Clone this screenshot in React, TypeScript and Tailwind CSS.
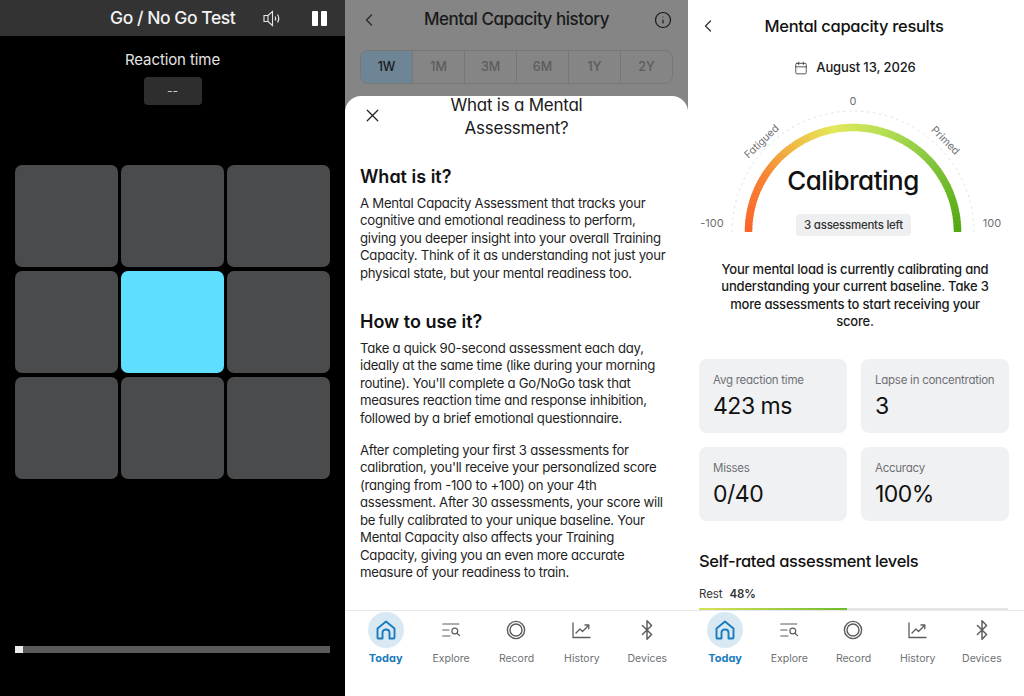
import React from "react";
import { ChevronLeft, X, Info, Calendar, Bluetooth } from "lucide-react";

const lerp = (a: number[], b: number[], t: number) => a.map((v, i) => Math.round(v + (b[i] - v) * t));
const stops: [number, number[]][] = [
  [0, [251, 101, 42]],
  [0.17, [248, 130, 50]],
  [0.33, [238, 196, 72]],
  [0.44, [228, 232, 90]],
  [0.6, [180, 222, 84]],
  [0.78, [130, 196, 60]],
  [1, [82, 168, 16]],
];
const colorAt = (t: number) => {
  for (let i = 1; i < stops.length; i++) {
    if (t <= stops[i][0]) {
      const [p0, c0] = stops[i - 1];
      const [p1, c1] = stops[i];
      const c = lerp(c0, c1, (t - p0) / (p1 - p0));
      return `rgb(${c[0]},${c[1]},${c[2]})`;
    }
  }
  return "rgb(82,168,16)";
};

function Gauge() {
  const cx = 165, cy = 138, r = 104.5;
  const n = 90;
  const segs = Array.from({ length: n }, (_, i) => {
    const a0 = Math.PI - (Math.PI * i) / n;
    const a1 = Math.PI - (Math.PI * (i + 1.3)) / n;
    const end = i === n - 1 ? 0 : a1;
    return {
      d: `M${cx + r * Math.cos(a0)} ${cy - r * Math.sin(a0)}A${r} ${r} 0 0 1 ${cx + r * Math.cos(end)} ${cy - r * Math.sin(end)}`,
      c: colorAt(i / (n - 1)),
    };
  });
  return (
    <svg width="336" height="146" viewBox="0 0 336 146" className="block">
      <path d={`M${cx - 121} ${cy}A121 121 0 0 1 ${cx + 121} ${cy}`} fill="none" stroke="#dfe2e6" strokeWidth="1" strokeDasharray="2.5 3.5" />
      {segs.map((s, i) => (
        <path key={i} d={s.d} fill="none" stroke={s.c} strokeWidth="7.5" />
      ))}
      <text x="165" y="11" textAnchor="middle" fontSize="11" fill="#6e7073">0</text>
      <text x="24" y="133" textAnchor="middle" fontSize="11" fill="#6e7073">-100</text>
      <text x="304" y="133" textAnchor="middle" fontSize="11" fill="#6e7073">100</text>
      <text x="0" y="0" textAnchor="middle" fontSize="10.5" fill="#6e7073" transform="translate(76 50) rotate(-44)">Fatigued</text>
      <text x="0" y="0" textAnchor="middle" fontSize="10.5" fill="#6e7073" transform="translate(255 49) rotate(45)">Primed</text>
    </svg>
  );
}

const HomeIcon = () => (
  <svg width="20" height="20" viewBox="0 0 20 20" fill="none" stroke="#1a7bbd" strokeWidth="1.9" strokeLinejoin="round" strokeLinecap="round">
    <path d="M1.5 8.5L10 1.5L18.5 8.5V17.5C18.5 18.1 18.1 18.5 17.5 18.5H13.5V12.5C13.5 10.6 12 9.5 10 9.5C8 9.5 6.5 10.6 6.5 12.5V18.5H2.5C1.9 18.5 1.5 18.1 1.5 17.5Z" />
  </svg>
);
const ExploreIcon = ({ c }: { c: string }) => (
  <svg width="19" height="14" viewBox="0 0 19 14" fill="none" stroke={c} strokeWidth="1.2" strokeLinecap="round">
    <path d="M0.8 1H16.8M0.8 7H7M0.8 13H8" />
    <circle cx="12.8" cy="8" r="2.9" />
    <path d="M15 10.2L17.5 12.6" />
  </svg>
);
const RecordIcon = ({ c }: { c: string }) => (
  <svg width="20" height="20" viewBox="0 0 20 20" fill="none" stroke={c}>
    <circle cx="10" cy="10" r="8.6" strokeWidth="1.4" />
    <circle cx="10" cy="10" r="6" strokeWidth="1.4" />
  </svg>
);
const HistoryIcon = ({ c }: { c: string }) => (
  <svg width="19" height="17" viewBox="0 0 19 17" fill="none" stroke={c} strokeWidth="1.3" strokeLinecap="round" strokeLinejoin="round">
    <path d="M1 1V15.5H18" />
    <path d="M4 11L8 7L10.5 9.5L16.5 3.5" />
    <path d="M13 3H16.8V6.8" />
  </svg>
);

const tabs = [
  { label: "Explore", Icon: ExploreIcon },
  { label: "Record", Icon: RecordIcon },
  { label: "History", Icon: HistoryIcon },
  {
    label: "Devices",
    Icon: ({ c }: { c: string }) => <Bluetooth size={22} color={c} strokeWidth={1.6} />,
  },
];

function TabBar({ cls }: { cls: string }) {
  return (
    <div className={`h-[86px] shrink-0 bg-white border-t border-[#e8e8e8] grid grid-cols-5 ${cls}`}>
      <div className="flex flex-col items-center pt-[1px]">
        <div className="w-9 h-9 rounded-full bg-[#d9e9f4] flex items-center justify-center">
          <HomeIcon />
        </div>
        <span className="mt-[3px] text-[11px] leading-[14px] font-bold text-[#1a7bbd]">Today</span>
      </div>
      {tabs.map(({ label, Icon }) => (
        <div key={label} className="flex flex-col items-center pt-[1px]">
          <div className="w-9 h-9 flex items-center justify-center">
            <Icon c="#5c5c5c" />
          </div>
          <span className="mt-[4px] text-[10.5px] leading-[14px] text-[#6e7073]">{label}</span>
        </div>
      ))}
    </div>
  );
}

function Stat({ label, value }: { label: string; value: string }) {
  return (
    <div className="h-[74px] rounded-lg bg-[#f0f1f3] px-[14px] pt-[14px]">
      <div className="text-[11.5px] leading-[14px] tracking-[-0.25px] whitespace-nowrap text-[#6e7073]">{label}</div>
      <div className="mt-[4px] text-[23px] leading-[30px] tracking-[-0.5px] text-[#111]">{value}</div>
    </div>
  );
}

export default function App() {
  return (
    <div className="w-[1024px] h-[696px] flex overflow-hidden bg-white font-['Inter',sans-serif]">
      {/* Panel 1 */}
      <div className="w-[345px] h-full shrink-0 bg-black flex flex-col items-center">
        <div className="w-full h-[36px] bg-[#333333] flex items-center pl-[110px] pr-[18px] text-white">
          <span className="text-[17.5px] font-medium text-[#f2f2f2] tracking-[-0.45px]">Go / No Go Test</span>
          <svg width="18" height="17" viewBox="0 0 18 17" fill="none" stroke="#e5e5e5" strokeWidth="1.1" className="ml-[28px]">
            <path d="M1 5.5H5L9.5 1.5V15.5L5 11.5H1Z" />
            <path d="M5 5.5V11.5" />
            <path d="M12 6.5Q13.5 8.5 12 10.5M14.5 4.5Q17 8.5 14.5 12.5" strokeWidth="1.2" />
          </svg>
          <div className="ml-auto flex gap-[3px]">
            <div className="w-[6px] h-[15px] bg-white rounded-[1px]" />
            <div className="w-[6px] h-[15px] bg-white rounded-[1px]" />
          </div>
        </div>
        <div className="mt-[14px] text-[15px] leading-[20px] tracking-[-0.1px] text-[#e4e4e4]">Reaction time</div>
        <div className="mt-[7px] w-[58px] h-[28px] rounded bg-[#2e2e2e] flex items-center justify-center text-[12px] text-[#cfcfcf]">--</div>
        <div className="mt-[59.5px] w-[315px] grid grid-cols-3 gap-[3.5px]">
          {Array.from({ length: 9 }, (_, i) => (
            <div key={i} className={`h-[102.5px] rounded-[7px] ${i === 4 ? "bg-[#5edfff]" : "bg-[#4a4b4d]"}`} />
          ))}
        </div>
        <div className="mt-[167px] w-[315px] h-[7px] bg-[#5a5a5a]">
          <div className="w-[8px] h-full bg-[#ececec]" />
        </div>
      </div>

      {/* Panel 2 */}
      <div className="w-[343px] h-full shrink-0 bg-[#858585] flex flex-col [font-feature-settings:'cv11']">
        <div className="h-[39px] flex items-center justify-between pl-[14px] pr-[16px] text-[#161616]">
          <ChevronLeft size={20} strokeWidth={1.6} color="#2a2a2a" />
          <span className="text-[17px] tracking-[-0.45px] font-medium text-[#1a1a1a]">Mental Capacity history</span>
          <Info size={18} strokeWidth={1.6} color="#1a1a1a" />
        </div>
        <div className="mt-[11px] mx-[15px] h-[34px] flex rounded-lg border border-[#777] overflow-hidden text-[12.5px] text-[#5c5c5c] font-medium">
          {["1W", "1M", "3M", "6M", "1Y", "2Y"].map((t, i) => (
            <div key={t} className={`flex-1 flex items-center justify-center ${i > 0 ? "border-l border-[#777]" : ""} ${i === 0 ? "bg-[#6e8595] text-[#1a1a1a]" : ""}`}>{t}</div>
          ))}
        </div>
        <div className="mt-[12px] flex-1 min-h-0 bg-white rounded-t-[16px] flex flex-col">
          <div className="relative flex-1 min-h-0 px-[15px]">
            <X size={21} strokeWidth={1.4} color="#222" className="absolute left-[17px] top-[9px]" />
            <div className="-mt-[2px] text-center text-[17px] leading-[23px] tracking-[-0.25px] text-[#1a1a1a] w-[180px] mx-auto">What is a Mental Assessment?</div>
            <h2 className="mt-[25px] text-[18px] leading-[24px] font-semibold text-[#111]">What is it?</h2>
            <p className="mt-[6px] text-[13.2px] leading-[17.4px] tracking-[-0.28px] text-[#1f1f1f]">A Mental Capacity Assessment that tracks your cognitive and emotional readiness to perform, giving you deeper insight into your overall Training Capacity. Think of it as understanding not just your physical state, but your mental readiness too.</p>
            <h2 className="mt-[28px] text-[18px] leading-[24px] font-semibold text-[#111]">How to use it?</h2>
            <p className="mt-[6px] text-[13.2px] leading-[17.4px] tracking-[-0.28px] text-[#1f1f1f]">Take a quick 90-second assessment each day, ideally at the same time (like during your morning routine). You'll complete a Go/NoGo task that measures reaction time and response inhibition, followed by a brief emotional questionnaire.</p>
            <p className="mt-[15px] text-[13.2px] leading-[17.4px] tracking-[-0.28px] text-[#1f1f1f] w-[310px]">After completing your first 3 assessments for calibration, you'll receive your personalized score (ranging from -100 to +100) on your 4th assessment. After 30 assessments, your score will be fully calibrated to your unique baseline. Your Mental Capacity also affects your Training Capacity, giving you an even more accurate measure of your readiness to train.</p>
          </div>
          <TabBar cls="px-[8px]" />
        </div>
      </div>

      {/* Panel 3 */}
      <div className="flex-1 h-full flex flex-col overflow-hidden bg-white [font-feature-settings:'cv11']">
        <div className="flex-1 min-h-0 overflow-hidden">
          <div className="relative h-[52px] flex items-center justify-center pr-[4px]">
            <ChevronLeft size={20} strokeWidth={1.5} color="#333" className="absolute left-[10px] top-[16px]" />
            <span className="text-[16.5px] tracking-[-0.3px] font-medium text-[#111] mt-[1px]">Mental capacity results</span>
          </div>
          <div className="mt-[5px] h-[22px] flex items-center justify-center gap-[8px] pr-[2px] text-[13px] tracking-[-0.1px] font-medium text-[#1a1a1a]">
            <Calendar size={14} strokeWidth={1.4} color="#333" />
            August 13, 2026
          </div>
          <div className="relative mt-[15px] h-[146px]">
            <Gauge />
            <div className="absolute left-0 w-[330px] top-[70px] text-center text-[26px] leading-[34px] tracking-[-0.5px] font-medium text-[#111]">Calibrating</div>
            <div className="absolute left-[108px] top-[120px] w-[115px] h-[22px] rounded bg-[#eeeff1] flex items-center justify-center pt-[1px] text-[11.5px] tracking-[-0.25px] font-medium text-[#333]">3 assessments left</div>
          </div>
          <p className="mt-[21px] ml-[26px] mr-[28px] text-center text-[13px] leading-[17.4px] tracking-[-0.2px] font-medium text-[#1a1a1a]">Your mental load is currently calibrating and understanding your current baseline. Take 3 more assessments to start receiving your score.</p>
          <div className="mt-[28px] mx-[11px] grid grid-cols-2 gap-x-[14px] gap-y-[14px] w-[310px]">
            <Stat label="Avg reaction time" value="423 ms" />
            <Stat label="Lapse in concentration" value="3" />
            <Stat label="Misses" value="0/40" />
            <Stat label="Accuracy" value="100%" />
          </div>
          <h2 className="mt-[28px] mx-[11px] text-[16.5px] leading-[24px] tracking-[-0.35px] font-medium text-[#111]">Self-rated assessment levels</h2>
          <div className="mt-[13px] mx-[11px] text-[11.5px] leading-[16px] tracking-[-0.1px] text-[#333]">Rest <span className="ml-[4px] font-semibold">48%</span></div>
          <div className="mt-[6px] mx-[11px] w-[309px] h-[3px] bg-[#e5e5e5]">
            <div className="w-[48%] h-full bg-gradient-to-r from-[#d8e25a] to-[#6cbb2c]" />
          </div>
        </div>
        <TabBar cls="pl-[5px] pr-[10px]" />
      </div>
    </div>
  );
}
